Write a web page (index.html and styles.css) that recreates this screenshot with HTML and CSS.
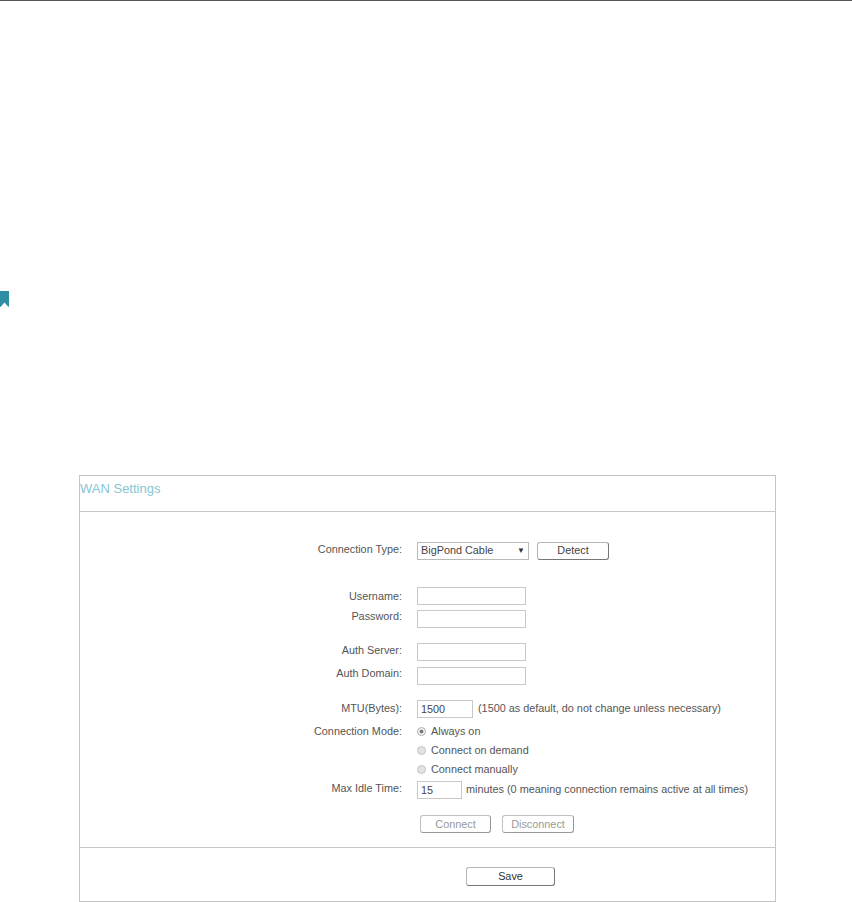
FILE: index.html
```html
<!DOCTYPE html>
<html lang="en">
<head>
    <meta charset="UTF-8">
    <meta name="viewport" content="width=device-width, initial-scale=1.0">
    <title>WAN Settings</title>
    <link rel="stylesheet" href="styles.css">
</head>
<body>
    <div class="top-rule"></div>
    <svg class="bookmark" width="9" height="17" viewBox="0 0 9 17">
        <path d="M0 0H9V16L8 15.500L4.500 11.500L1 15.500L0 16Z" fill="#2f8ea3"/>
    </svg>

    <div class="panel">
        <div class="panel-title">WAN Settings</div>

        <div class="panel-body">
            <div class="row row-type">
                <label class="row-label">Connection Type:</label>
                <div class="select-box">
                    <span>BigPond Cable</span>
                    <span class="arrow">&#9660;</span>
                </div>
                <button class="btn btn-detect">Detect</button>
            </div>

            <div class="row row-username">
                <label class="row-label">Username:</label>
                <div class="text-box"></div>
            </div>
            <div class="row row-password">
                <label class="row-label">Password:</label>
                <div class="text-box"></div>
            </div>

            <div class="row row-server">
                <label class="row-label">Auth Server:</label>
                <div class="text-box"></div>
            </div>
            <div class="row row-domain">
                <label class="row-label">Auth Domain:</label>
                <div class="text-box"></div>
            </div>

            <div class="row row-mtu">
                <label class="row-label">MTU(Bytes):</label>
                <div class="text-box text-box-mtu">1500</div>
                <span class="hint">(1500 as default, do not change unless necessary)</span>
            </div>

            <div class="row row-mode">
                <label class="row-label">Connection Mode:</label>
                <span class="radio radio-on"></span>
                <span class="radio-text">Always on</span>
            </div>
            <div class="row row-radio">
                <span class="row-label"></span>
                <span class="radio"></span>
                <span class="radio-text">Connect on demand</span>
            </div>
            <div class="row row-radio">
                <span class="row-label"></span>
                <span class="radio"></span>
                <span class="radio-text">Connect manually</span>
            </div>

            <div class="row row-idle">
                <label class="row-label">Max Idle Time:</label>
                <div class="text-box text-box-idle">15</div>
                <span class="hint hint-idle">minutes (0 meaning connection remains active at all times)</span>
            </div>

            <div class="row row-actions">
                <span class="row-label"></span>
                <button class="btn btn-off btn-connect">Connect</button>
                <button class="btn btn-off btn-disconnect">Disconnect</button>
            </div>
        </div>

        <div class="panel-footer">
            <button class="btn btn-save">Save</button>
        </div>
    </div>
</body>
</html>
```

FILE: styles.css
```css
body {
    font-family: "Liberation Sans", Arial, sans-serif;
    font-size: 10.850px;
    color: #555;
    background-color: #ffffff;
    margin: 0;
    padding: 0;
}
.top-rule {
    height: 1px;
    background-color: #555;
}
.bookmark {
    display: block;
    margin-top: 290px;
}
.panel {
    box-sizing: border-box;
    width: 697px;
    height: 427px;
    margin: 167px 0 0 79px;
    border: 1px solid #c4c4c4;
    display: flex;
    flex-direction: column;
}
.panel-title {
    box-sizing: border-box;
    height: 36px;
    padding: 6px 0 0 0;
    font-size: 13px;
    line-height: 14px;
    color: #86c6d3;
    border-bottom: 1px solid #c8c8c8;
}
.panel-body {
    box-sizing: border-box;
    height: 336px;
    padding-top: 30px;
    border-bottom: 1px solid #c8c8c8;
}
.panel-footer {
    display: flex;
    justify-content: flex-start;
    padding: 19px 0 0 386px;
}
.row {
    display: flex;
    align-items: center;
}
.row-label {
    width: 322px;
    margin-right: 15px;
    margin-bottom: 4px;
    text-align: right;
    flex-shrink: 0;
}
.row-username { margin-top: 27px; }
.row-username .row-label { margin-bottom: 0; }
.row-password { margin-top: 5px; }
.row-password .row-label { margin-bottom: 6px; }
.row-server { margin-top: 15px; }
.row-domain { margin-top: 6px; }
.row-domain .row-label { margin-bottom: 6px; }
.row-mtu { margin-top: 15px; }
.row-mtu .row-label { margin-bottom: 2px; }
.row-mode { margin-top: 5px; height: 18px; }
.row-mode .row-label { margin-bottom: 2px; }
.row-radio { margin-top: 1px; height: 18px; }
.row-idle { margin-top: 2px; }
.row-actions { margin-top: 16px; }

.text-box {
    box-sizing: border-box;
    width: 109px;
    height: 18px;
    padding: 1px 0 0 3px;
    line-height: 15px;
    border: 1px solid #c8c8c8;
    color: #444;
}
.text-box-mtu { width: 56px; }
.text-box-idle { width: 45px; }
.hint { margin-left: 5px; margin-bottom: 2px; }
.hint-idle { margin-left: 4px; }

.select-box {
    box-sizing: border-box;
    width: 112px;
    height: 18px;
    padding: 0 3px 2px 3px;
    border: 1px solid #b9b9b9;
    display: flex;
    justify-content: space-between;
    align-items: center;
    color: #444;
}
.arrow {
    font-size: 8px;
    color: #333;
}
.btn {
    box-sizing: border-box;
    height: 18px;
    padding: 0 0 2px 0;
    font-family: inherit;
    font-size: 10.850px;
    color: #444;
    background-color: #ffffff;
    border: 1px solid #b5b5b5;
    border-right-color: #777;
    border-bottom-color: #777;
    border-radius: 3px;
}
.btn-detect {
    width: 72px;
    margin-left: 8px;
}
.btn-off {
    padding-bottom: 0;
    color: #999;
    border-color: #c0c0c0;
    border-right-color: #999;
    border-bottom-color: #999;
}
.btn-connect {
    width: 71px;
    margin-left: 3px;
}
.btn-disconnect {
    width: 72px;
    margin-left: 11px;
}
.btn-save {
    width: 89px;
    height: 19px;
    color: #333;
}

.radio {
    box-sizing: border-box;
    width: 9px;
    height: 9px;
    margin-bottom: 2px;
    border: 1px solid #c4c4c4;
    border-radius: 50%;
    background-color: #e2e2e2;
}
.radio-on {
    background-color: #777;
    box-shadow: inset 0 0 0 1.500px #ffffff;
}
.radio-text {
    margin-left: 5px;
    margin-bottom: 2px;
}
```
